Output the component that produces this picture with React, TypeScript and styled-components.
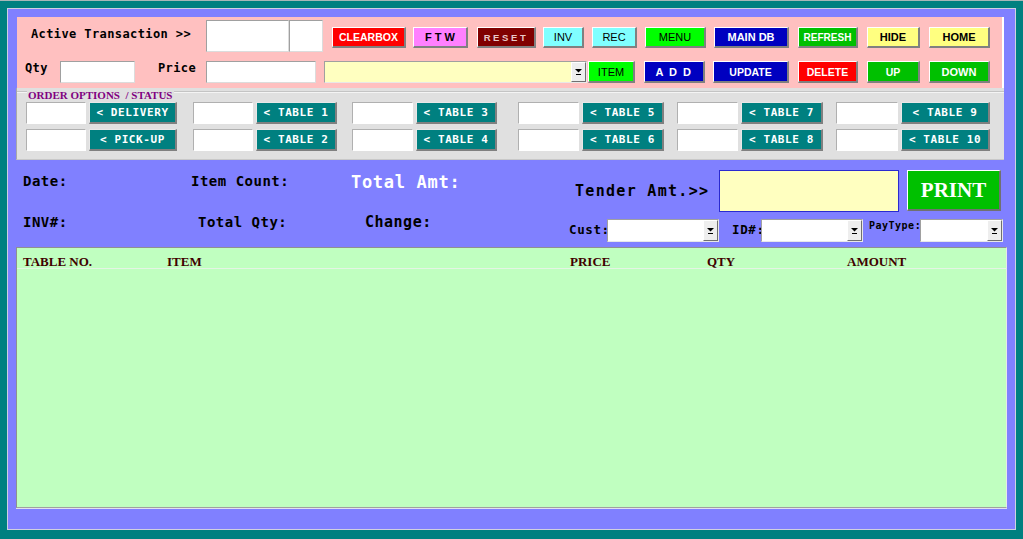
import React from 'react'
import styled, { createGlobalStyle } from 'styled-components'

const MONO = `'DejaVu Sans Mono', 'Liberation Mono', monospace`
const SERIF = `'Liberation Serif', 'Times New Roman', serif`
const SANS = `'Liberation Sans', Arial, sans-serif`

const GlobalStyle = createGlobalStyle`
  html, body {
    margin: 0;
    padding: 0;
    background: #008080;
  }
  body {
    font-family: ${SANS};
  }
`

const Page = styled.div`
  width: 1023px;
  height: 539px;
  box-sizing: border-box;
  padding: 7px 7px 9px 7px;
  border-top: 1px solid #a8b8b8;
  background: #008080;
`

const Window = styled.div`
  height: 100%;
  box-sizing: border-box;
  border: 1px solid #d0d0e0;
  background: #8080ff;
  padding: 8px 8px 0 8px;
  display: flex;
  flex-direction: column;
`

// ---- top pink panel ----

const TopPanel = styled.div`
  margin: 0 3px 0 1px;
  height: 71px;
  box-sizing: border-box;
  background: #ffc0c0;
  border-right: 2px solid #ffffff;
  padding-top: 3px;
  display: flex;
  flex-direction: column;
  gap: 9px;
`

const Row = styled.div<{ $h: number }>`
  display: flex;
  align-items: flex-start;
  height: ${p => p.$h}px;
`

const FieldLabel = styled.div<{ $w: number; $pl: number; $mt: number }>`
  width: ${p => p.$w}px;
  padding-left: ${p => p.$pl}px;
  margin-top: ${p => p.$mt}px;
  box-sizing: border-box;
  font: bold 12px/1 ${MONO};
  letter-spacing: 0.4px;
  color: #000;
  white-space: nowrap;
`

const Field = styled.div<{ $w: number; $h: number; $bg?: string; $ml?: number }>`
  width: ${p => p.$w}px;
  height: ${p => p.$h}px;
  margin-left: ${p => p.$ml ?? 0}px;
  box-sizing: border-box;
  background: ${p => p.$bg ?? '#ffffff'};
  border: 1px solid;
  border-color: #a0a0a0 #dcdcdc #dcdcdc #a0a0a0;
  flex-shrink: 0;
`

const Btn = styled.button<{
  $w: number
  $h: number
  $ml: number
  $mt: number
  $bg: string
  $fg: string
  $bold: boolean
  $size: number
  $ls: number
}>`
  width: ${p => p.$w}px;
  height: ${p => p.$h}px;
  margin: ${p => p.$mt}px 0 0 ${p => p.$ml}px;
  padding: 0;
  box-sizing: border-box;
  flex-shrink: 0;
  background: ${p => p.$bg};
  color: ${p => p.$fg};
  font-family: ${SANS};
  font-weight: ${p => (p.$bold ? 700 : 400)};
  font-size: ${p => p.$size}px;
  letter-spacing: ${p => p.$ls}px;
  border-style: solid;
  border-width: 1px 2px 2px 1px;
  border-color: #ffffff #808080 #808080 #ffffff;
  white-space: nowrap;
  cursor: default;
`

const Combo = styled.div<{ $w: number; $h: number; $bg: string; $ml?: number }>`
  width: ${p => p.$w}px;
  height: ${p => p.$h}px;
  margin-left: ${p => p.$ml ?? 0}px;
  box-sizing: border-box;
  flex-shrink: 0;
  background: ${p => p.$bg};
  border: 1px solid;
  border-color: #a0a0a0 #e8e8e8 #e8e8e8 #a0a0a0;
  display: flex;
  justify-content: flex-end;
`

const ComboArrow = styled.div`
  width: 15px;
  height: 100%;
  box-sizing: border-box;
  background: #eeeeee;
  border-style: solid;
  border-width: 1px;
  border-color: #ffffff #707070 #707070 #ffffff;
  display: flex;
  align-items: center;
  justify-content: center;
`

const Arrow = () => (
  <svg width="7" height="6" viewBox="0 0 7 6">
    <polygon points="0,0 7,0 3.5,3.5" fill="#000" />
    <rect x="1" y="5" width="5" height="1" fill="#000" />
  </svg>
)

type BtnSpec = {
  label: string
  w: number
  ml: number
  bg: string
  fg: string
  bold?: boolean
  size?: number
  ls?: number
}

const row1Buttons: BtnSpec[] = [
  { label: 'CLEARBOX', w: 74, ml: 9, bg: '#ff0000', fg: '#ffffff', bold: true, size: 10.5 },
  { label: 'F T W', w: 55, ml: 7, bg: '#ff80ff', fg: '#000000', bold: true, size: 11 },
  { label: 'RESET', w: 59, ml: 9, bg: '#800000', fg: '#e8c8c8', bold: true, size: 9.5, ls: 2.6 },
  { label: 'INV', w: 41, ml: 7, bg: '#80ffff', fg: '#000000', size: 11 },
  { label: 'REC', w: 45, ml: 8, bg: '#80ffff', fg: '#000000', size: 11 },
  { label: 'MENU', w: 61, ml: 8, bg: '#00ff00', fg: '#000000', size: 11 },
  { label: 'MAIN DB', w: 75, ml: 8, bg: '#0000c0', fg: '#ffffff', bold: true, size: 11 },
  { label: 'REFRESH', w: 60, ml: 9, bg: '#00c000', fg: '#ffffff', bold: true, size: 10 },
  { label: 'HIDE', w: 53, ml: 9, bg: '#ffff80', fg: '#000000', bold: true, size: 11 },
  { label: 'HOME', w: 61, ml: 9, bg: '#ffff80', fg: '#000000', bold: true, size: 11 },
]

const row2Buttons: BtnSpec[] = [
  { label: 'ITEM', w: 47, ml: 1, bg: '#00ff00', fg: '#000000', size: 11 },
  { label: 'A D D', w: 61, ml: 9, bg: '#0000c0', fg: '#ffffff', bold: true, size: 11, ls: 1.5 },
  { label: 'UPDATE', w: 76, ml: 8, bg: '#0000c0', fg: '#ffffff', bold: true, size: 10.5 },
  { label: 'DELETE', w: 60, ml: 9, bg: '#ff0000', fg: '#ffffff', bold: true, size: 10.5 },
  { label: 'UP', w: 53, ml: 9, bg: '#00c000', fg: '#ffffff', bold: true, size: 10.5 },
  { label: 'DOWN', w: 61, ml: 9, bg: '#00c000', fg: '#ffffff', bold: true, size: 11 },
]

const renderButtons = (list: BtnSpec[], h: number, mt: number) =>
  list.map(b => (
    <Btn
      key={b.label}
      $w={b.w}
      $h={h}
      $ml={b.ml}
      $mt={mt}
      $bg={b.bg}
      $fg={b.fg}
      $bold={!!b.bold}
      $size={b.size ?? 11}
      $ls={b.ls ?? 0}
    >
      {b.label}
    </Btn>
  ))

// ---- order options group ----

const Group = styled.div`
  margin-right: 3px;
  height: 72px;
  box-sizing: border-box;
  background: #e0e0e0;
  border-left: 1px solid #a8a8a8;
  border-bottom: 1px solid #c8c8c8;
  padding-top: 2px;
`

const GroupHead = styled.div`
  display: flex;
  align-items: flex-start;
  height: 10px;
`

const HeadLine = styled.div<{ $w?: number }>`
  ${p => (p.$w ? `width: ${p.$w}px;` : 'flex: 1;')}
  margin-top: 1px;
  border-top: 1px solid #c4c4c4;
  border-bottom: 1px solid #f4f4f4;
`

const GroupTitle = styled.span`
  font: bold 11px/10px ${SERIF};
  color: #800080;
  padding: 0 2px 0 1px;
  white-space: pre;
`

const PairRows = styled.div`
  margin-top: 2px;
  display: flex;
  flex-direction: column;
  gap: 5px;
`

const PairRow = styled.div`
  display: flex;
  height: 22px;
  padding-left: 9px;
`

const Pair = styled.div<{ $ml: number }>`
  display: flex;
  margin-left: ${p => p.$ml}px;
`

const StatusBox = styled.div<{ $w: number }>`
  width: ${p => p.$w}px;
  height: 22px;
  box-sizing: border-box;
  background: #ffffff;
  border: 1px solid;
  border-color: #b0b0b0 #ffffff #ffffff #b0b0b0;
`

const TableBtn = styled.button<{ $w: number }>`
  width: ${p => p.$w}px;
  height: 22px;
  margin-left: 3px;
  padding: 0;
  box-sizing: border-box;
  background: #008080;
  color: #ffffff;
  font: bold 11px/1 ${MONO};
  letter-spacing: 0.6px;
  border-style: solid;
  border-width: 1px 2px 2px 1px;
  border-color: #e8e8e8 #808080 #808080 #e8e8e8;
  white-space: pre;
  cursor: default;
`

const pairs = [
  { ml: 0, iw: 60, bw: 88, top: '< DELIVERY', bottom: '< PICK-UP' },
  { ml: 16, iw: 60, bw: 81, top: '< TABLE 1', bottom: '< TABLE 2' },
  { ml: 15, iw: 61, bw: 81, top: '< TABLE 3', bottom: '< TABLE 4' },
  { ml: 21, iw: 61, bw: 82, top: '< TABLE 5', bottom: '< TABLE 6' },
  { ml: 13, iw: 61, bw: 82, top: '< TABLE 7', bottom: '< TABLE 8' },
  { ml: 13, iw: 62, bw: 89, top: '< TABLE 9', bottom: '< TABLE 10' },
]

// ---- info section ----

const Info = styled.div`
  height: 87px;
  display: flex;
  padding-left: 7px;
`

const InfoLeft = styled.div`
  width: 546px;
  padding-top: 14px;
  display: flex;
  flex-direction: column;
  gap: 24px;
`

const InfoRow = styled.div`
  display: flex;
  align-items: flex-start;
  height: 17px;
`

const InfoLabel = styled.div<{ $w?: number; $size: number; $ls: number; $color?: string }>`
  ${p => (p.$w ? `width: ${p.$w}px;` : '')}
  font: bold ${p => p.$size}px/1 ${MONO};
  letter-spacing: ${p => p.$ls}px;
  color: ${p => p.$color ?? '#000000'};
  white-space: nowrap;
`

const InfoRight = styled.div`
  flex: 1;
  padding-top: 10px;
  display: flex;
  flex-direction: column;
  gap: 7px;
`

const TenderRow = styled.div`
  display: flex;
  align-items: center;
  height: 42px;
`

const TenderLabel = styled.div`
  width: 150px;
  padding-left: 6px;
  box-sizing: border-box;
  font: bold 15px/1 ${MONO};
  letter-spacing: 1.3px;
  color: #000;
  white-space: nowrap;
`

const TenderBox = styled.div`
  width: 180px;
  height: 42px;
  box-sizing: border-box;
  background: #ffffc0;
  border: 1px solid #2a2ad0;
`

const PrintBtn = styled.button`
  width: 94px;
  height: 41px;
  margin-left: 8px;
  align-self: flex-start;
  padding: 0;
  box-sizing: border-box;
  background: #00c000;
  color: #ffffff;
  font: bold 21px/1 ${SERIF};
  border-style: solid;
  border-width: 1px 2px 2px 1px;
  border-color: #ffffff #707070 #707070 #ffffff;
  cursor: default;
`

const ComboRow = styled.div`
  display: flex;
  align-items: center;
  height: 23px;
`

const SmallLabel = styled.div<{ $w: number; $pl: number; $size: number; $top?: boolean }>`
  width: ${p => p.$w}px;
  padding-left: ${p => p.$pl}px;
  box-sizing: border-box;
  font: bold ${p => p.$size}px/1 ${MONO};
  letter-spacing: ${p => (p.$size < 11 ? 0.5 : 0.6)}px;
  color: #000;
  white-space: nowrap;
  ${p => (p.$top ? 'align-self: flex-start; margin-top: 2px;' : '')}
`

// ---- grid ----

const GridPanel = styled.div`
  height: 261px;
  box-sizing: border-box;
  background: #c0ffc0;
  border: 1px solid;
  border-color: #909090 #e8e8e8 #a0a0a0 #909090;
  box-shadow: 0 1px 0 #e0e0f0;
`

const GridHead = styled.div`
  display: grid;
  grid-template-columns: 144px 403px 137px 140px 1fr;
  height: 21px;
  box-sizing: border-box;
  padding: 7px 0 0 6px;
  border-bottom: 1px solid #e4f4e4;
`

const HeadCell = styled.div`
  font: bold 13px/1 ${SERIF};
  color: #400000;
  white-space: nowrap;
`

const App = () => {
  return (
    <>
      <GlobalStyle />
      <Page>
        <Window>
          <TopPanel>
            <Row $h={32}>
              <FieldLabel $w={189} $pl={14} $mt={8}>
                Active Transaction &gt;&gt;
              </FieldLabel>
              <Field $w={83} $h={32} />
              <Field $w={34} $h={32} />
              {renderButtons(row1Buttons, 21, 7)}
            </Row>
            <Row $h={22}>
              <FieldLabel $w={43} $pl={8} $mt={1}>
                Qty
              </FieldLabel>
              <Field $w={75} $h={22} />
              <FieldLabel $w={71} $pl={23} $mt={1}>
                Price
              </FieldLabel>
              <Field $w={110} $h={22} />
              <Combo $w={263} $h={22} $bg="#ffffc0" $ml={8}>
                <ComboArrow>
                  <Arrow />
                </ComboArrow>
              </Combo>
              {renderButtons(row2Buttons, 22, 0)}
            </Row>
          </TopPanel>

          <Group>
            <GroupHead>
              <HeadLine $w={10} />
              <GroupTitle>ORDER OPTIONS  / STATUS</GroupTitle>
              <HeadLine />
            </GroupHead>
            <PairRows>
              <PairRow>
                {pairs.map(p => (
                  <Pair key={p.top} $ml={p.ml}>
                    <StatusBox $w={p.iw} />
                    <TableBtn $w={p.bw}>{p.top}</TableBtn>
                  </Pair>
                ))}
              </PairRow>
              <PairRow>
                {pairs.map(p => (
                  <Pair key={p.bottom} $ml={p.ml}>
                    <StatusBox $w={p.iw} />
                    <TableBtn $w={p.bw}>{p.bottom}</TableBtn>
                  </Pair>
                ))}
              </PairRow>
            </PairRows>
          </Group>

          <Info>
            <InfoLeft>
              <InfoRow>
                <InfoLabel $w={168} $size={14} $ls={0.5}>
                  Date:
                </InfoLabel>
                <InfoLabel $w={160} $size={14} $ls={0.5}>
                  Item Count:
                </InfoLabel>
                <InfoLabel $size={17} $ls={0.7} $color="#ffffff">
                  Total Amt:
                </InfoLabel>
              </InfoRow>
              <InfoRow>
                <InfoLabel $w={175} $size={14} $ls={0.5}>
                  INV#:
                </InfoLabel>
                <InfoLabel $w={167} $size={14} $ls={0.5}>
                  Total Qty:
                </InfoLabel>
                <InfoLabel $size={15} $ls={0.5}>
                  Change:
                </InfoLabel>
              </InfoRow>
            </InfoLeft>
            <InfoRight>
              <TenderRow>
                <TenderLabel>Tender Amt.&gt;&gt;</TenderLabel>
                <TenderBox />
                <PrintBtn>PRINT</PrintBtn>
              </TenderRow>
              <ComboRow>
                <SmallLabel $w={38} $pl={0} $size={12.5}>
                  Cust:
                </SmallLabel>
                <Combo $w={112} $h={23} $bg="#ffffff">
                  <ComboArrow>
                    <Arrow />
                  </ComboArrow>
                </Combo>
                <SmallLabel $w={42} $pl={13} $size={12.5}>
                  ID#:
                </SmallLabel>
                <Combo $w={102} $h={23} $bg="#ffffff">
                  <ComboArrow>
                    <Arrow />
                  </ComboArrow>
                </Combo>
                <SmallLabel $w={57} $pl={6} $size={10} $top>
                  PayType:
                </SmallLabel>
                <Combo $w={83} $h={23} $bg="#ffffff">
                  <ComboArrow>
                    <Arrow />
                  </ComboArrow>
                </Combo>
              </ComboRow>
            </InfoRight>
          </Info>

          <GridPanel>
            <GridHead>
              <HeadCell>TABLE NO.</HeadCell>
              <HeadCell>ITEM</HeadCell>
              <HeadCell>PRICE</HeadCell>
              <HeadCell>QTY</HeadCell>
              <HeadCell>AMOUNT</HeadCell>
            </GridHead>
          </GridPanel>
        </Window>
      </Page>
    </>
  )
}

export default App
